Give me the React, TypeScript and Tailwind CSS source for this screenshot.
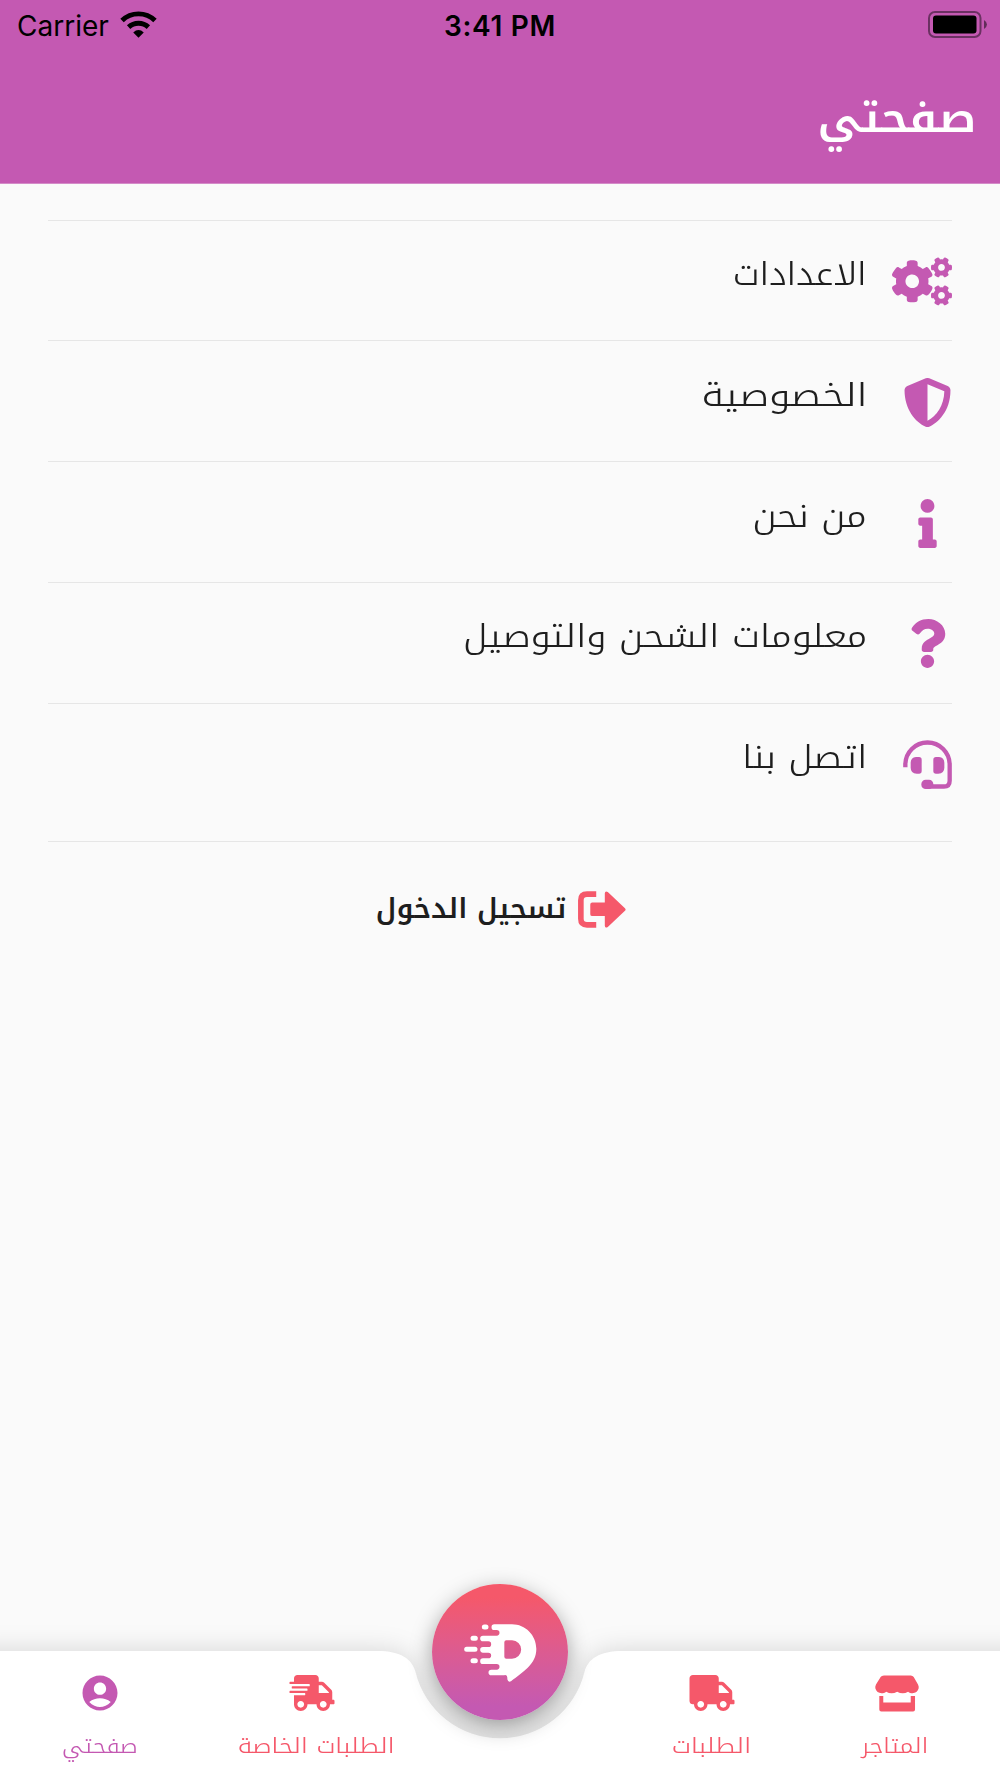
import type { ReactNode } from 'react';
import { FaCogs, FaInfo, FaQuestion, FaShieldAlt, FaShippingFast, FaTruck } from 'react-icons/fa';
import { MdAccountCircle } from 'react-icons/md';

function WifiIcon() {
  return (
    <svg viewBox="0 0 110 82" className="mb-0.5 w-[37px] h-[27px]" fill="none" stroke="#000">
      <path d="M5 29 A72 72 0 0 1 105 29" strokeWidth="15" />
      <path d="M25 49 A44 44 0 0 1 85 49" strokeWidth="15" />
      <path d="M39 65 Q55 50 71 65 L55 81 Z" fill="#000" stroke="none" />
    </svg>
  );
}

function BatteryIcon() {
  return (
    <svg viewBox="0 0 60 28" className="mb-0.5 w-[60px] h-7">
      <rect x="1" y="1" width="51.5" height="25" rx="6" fill="none" stroke="#000" strokeOpacity="0.45" strokeWidth="2" />
      <rect x="5" y="4.5" width="43.5" height="18" rx="3" />
      <path d="M56 9 Q59 11 59 13.5 T56 18 Z" fillOpacity="0.5" />
    </svg>
  );
}

function HeadsetIcon() {
  return (
    <svg viewBox="24 24 147 147" className="size-[49px]" fill="currentColor">
      <path d="M31 106 V98 A66.5 66.5 0 0 1 164 98 V146 Q164 163.5 147 163.5 H98" fill="none" stroke="currentColor" strokeWidth="13" />
      <rect x="79" y="143" width="36" height="28" rx="13" />
      <path d="M63 75 H72 Q80 75 80 83 V117 Q80 125 72 125 H65 Q47 123 47 107 V92 Q47 77 63 75 Z" />
      <path d="M132 75 H123 Q115 75 115 83 V117 Q115 125 123 125 H130 Q148 123 148 107 V92 Q148 77 132 75 Z" />
    </svg>
  );
}

function SignInIcon() {
  return (
    <svg viewBox="25 27 145 112" className="w-12 h-[37px]" fill="currentColor">
      <path d="M80 36.5 H52 Q33.5 36.5 33.5 55 V111 Q33.5 129.5 52 129.5 H80" fill="none" stroke="currentColor" strokeWidth="17" />
      <path d="M68 62 H106 V34 Q107 25 115 30 L167 79 Q171 83 167 87 L115 136 Q107 141 106 132 V103 H68 Q62 103 62 97 V68 Q62 62 68 62 Z" />
    </svg>
  );
}

function StoreIcon() {
  return (
    <svg viewBox="30 29 133 111" className="ml-[5px] w-[44px] h-[37px]" fill="currentColor">
      <path d="M57 30 H138 Q144 30 147 35 L160 57 Q163 63 162 69 C159 84 141 88 130 79 Q114 89 97 79 Q80 89 64 79 C52 88 34 84 31 69 Q30 63 33 57 L47 35 Q50 30 57 30 Z" />
      <path d="M43 92 H55 V112 H138 V92 H151 V133 Q151 139 145 139 H49 Q43 139 43 133 Z" />
    </svg>
  );
}

function Logo() {
  return (
    <svg viewBox="0 0 264 216" className="w-[88px] h-[72px]" fill="#fff">
      <path
        fillRule="evenodd"
        d="M168 25 H115 a8.5 8.5 0 0 0 0 17 H122 a8.5 8.5 0 0 1 0 17 H81 a8.5 8.5 0 0 0 0 17 H97 a8.5 8.5 0 0 1 0 17 H81 a8.5 8.5 0 0 0 0 17 H97 a8.5 8.5 0 0 1 0 17 H81 a8.5 8.5 0 0 0 0 17 H122 a8.5 8.5 0 0 1 0 17 H106 a8.5 8.5 0 0 0 0 17 H144 Q154 175 154 185 V190 Q156 200 165 196 C200 168 241 145 241 99 C241 58 208 25 168 25 Z M145 79 Q145 73 151 73 H168 A27.5 27.5 0 0 1 168 128 H151 Q145 128 145 122 Z"
      />
      <path d="M85 33 H90 M51 67 H58 M32 100 H57 M51 134 H58" stroke="#fff" strokeWidth="15" strokeLinecap="round" />
    </svg>
  );
}

const menu: { label: string; icon: ReactNode; stretch: string }[] = [
  { label: 'الاعدادات', icon: <FaCogs className="h-[49px] w-[61px]" />, stretch: 'scale-x-[1.12]' },
  { label: 'الخصوصية', icon: <FaShieldAlt className="size-[49px]" />, stretch: 'scale-x-[1.235]' },
  { label: 'من نحن', icon: <FaInfo className="size-[49px]" />, stretch: 'scale-x-[1.17]' },
  { label: 'معلومات الشحن والتوصيل', icon: <FaQuestion className="size-[49px]" />, stretch: 'scale-x-[1.17]' },
  { label: 'اتصل بنا', icon: <HeadsetIcon />, stretch: 'scale-x-[1.165]' },
];

interface NavItemProps {
  icon: ReactNode;
  label: string;
  className: string;
  stretch: string;
}

function NavItem({ icon, label, className, stretch }: NavItemProps) {
  return (
    <a href="#" className={`flex flex-col items-center ${className}`}>
      <span className="flex h-[42px] items-center">{icon}</span>
      <span className={`mt-4 text-[21px] leading-8 font-light whitespace-nowrap ${stretch}`}>{label}</span>
    </a>
  );
}

export default function App() {
  return (
    <div dir="rtl" className="flex h-[1778px] w-[1000px] flex-col overflow-hidden bg-[#fafafa] font-['Noto_Kufi_Arabic','DejaVu_Sans',sans-serif] text-[#1e1e1e]">
      <header className="h-[184px] shrink-0 border-b border-[#d48bc8] bg-[#c459b2]">
        <div dir="ltr" className="grid h-[51px] grid-cols-3 items-center px-3 font-['Inter',sans-serif] text-[28px] leading-none text-black">
          <div className="flex items-center gap-[11px] pl-[5px]">
            <span>Carrier</span>
            <WifiIcon />
          </div>
          <span className="text-center font-semibold tracking-[0.7px]">3:41 PM</span>
          <div className="flex justify-end">
            <BatteryIcon />
          </div>
        </div>
        <h1 className="mt-8 origin-right scale-x-[1.08] pr-[22px] text-[42px] leading-[70px] font-semibold text-white">صفحتي</h1>
      </header>

      <main className="grow px-12 pt-[35.5px]">
        <ul className="border-b border-[#e6e6e6] pb-[18px]">
          {menu.map((item) => (
            <li key={item.label} className="flex h-[120.75px] gap-[25px] border-t border-[#e6e6e6] pt-[36.5px]">
              <span className="flex w-[60px] shrink-0 text-[#c459b2]">{item.icon}</span>
              <span className={`origin-right text-[32px] leading-[36px] font-light ${item.stretch}`}>{item.label}</span>
            </li>
          ))}
        </ul>
        <button className="mx-auto mt-11 flex items-center gap-3 pl-0.5">
          <span className="text-[#f5586a]"><SignInIcon /></span>
          <span className="text-[28px] leading-[46px] font-semibold">تسجيل الدخول</span>
        </button>
      </main>

      <nav className="relative h-[127px] shrink-0">
        <svg viewBox="0 0 1000 127" className="absolute inset-0 overflow-visible drop-shadow-[0_0_13px_rgba(0,0,0,0.15)]">
          <path d="M-30 0 H377 C401 0 412 8 415.5 21 A87 87 0 0 0 584.5 21 C588 8 599 0 623 0 H1030 V160 H-30 Z" fill="#fff" />
        </svg>
        <div className="relative flex pt-[21px] text-[#f5586a]">
          <NavItem className="w-[211px]" stretch="scale-x-[1.165]" icon={<StoreIcon />} label="المتاجر" />
          <NavItem className="w-[155px]" stretch="scale-x-[1.225]" icon={<FaTruck className="h-9 w-[46px]" />} label="الطلبات" />
          <NavItem className="mr-[202px] w-[232px]" stretch="scale-x-[1.205]" icon={<FaShippingFast className="mr-2 h-9 w-[46px]" />} label="الطلبات الخاصة" />
          <NavItem className="w-[200px] text-[#c459b2]" stretch="scale-x-[1.115]" icon={<MdAccountCircle className="size-[42px]" />} label="صفحتي" />
        </div>
        <button className="absolute -top-[67.5px] left-[432px] flex size-[136px] items-center justify-center rounded-full bg-linear-to-b from-[#f5586a] from-10% to-[#c459b2] to-90% shadow-[0_7px_22px_rgba(0,0,0,0.38)]">
          <Logo />
        </button>
      </nav>
    </div>
  );
}
